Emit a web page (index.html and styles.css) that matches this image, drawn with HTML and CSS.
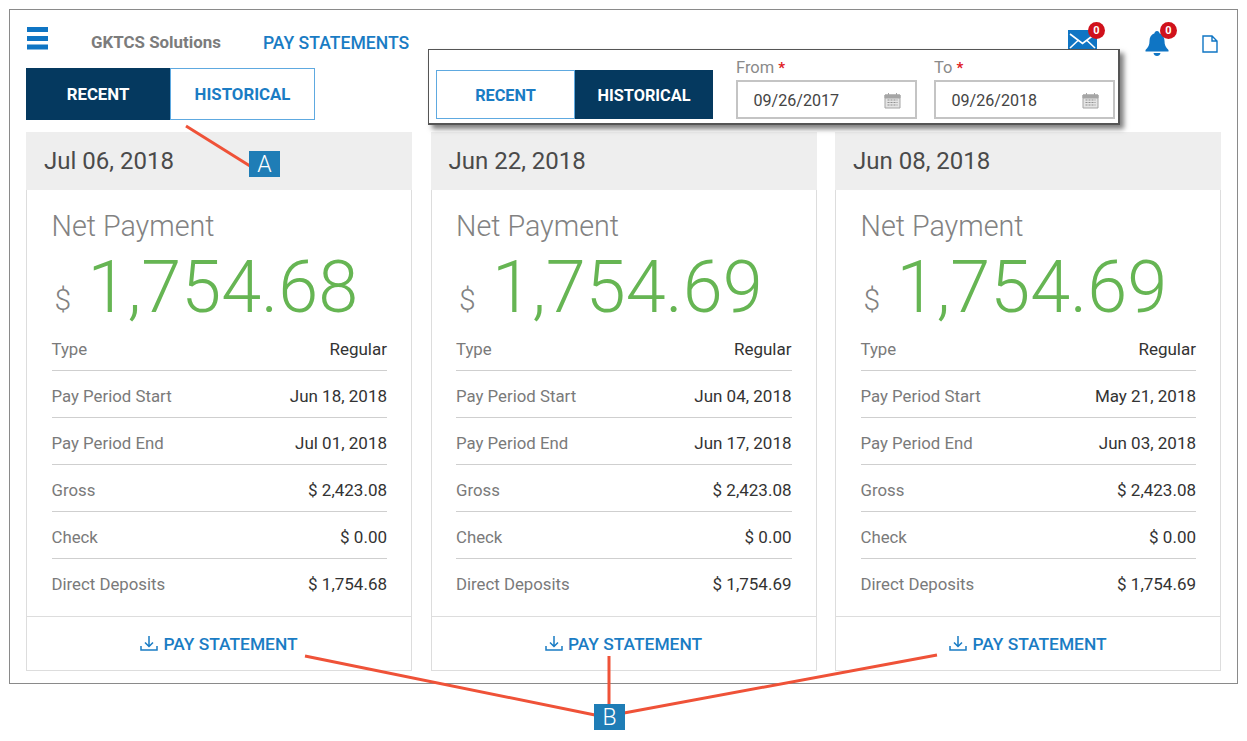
FILE: index.html
```html
<!DOCTYPE html>
<html lang="en">
<head>
    <meta charset="UTF-8">
    <title>Pay Statements</title>
    <link rel="stylesheet" href="styles.css">
</head>
<body>
    <div class="frame">
        <div class="header">
            <svg class="menu-icon" width="21" height="23" viewBox="0 0 21 23"><path d="M0 0h21v5H0zM0 9h21v5H0zM0 17.500h21v5H0z" fill="#0f75c4"/></svg>
            <div class="company">GKTCS Solutions</div>
            <div class="page-title">PAY STATEMENTS</div>
            <div class="header-icons">
                <div class="icon-wrap mail">
                    <svg width="29" height="24" viewBox="0 0 29 24"><rect width="29" height="24" fill="#0f75c4"/><path d="M2 4l12.500 9.500L27 4M2 18l8-7.500M27 18l-8-7.500" fill="none" stroke="#fff" stroke-width="1.600"/></svg>
                    <span class="badge">0</span>
                </div>
                <div class="icon-wrap bell">
                    <svg width="24" height="26" viewBox="0 0 24 26"><path d="M12 1c1.500 0 2.500 1 2.500 2.300C18 4.500 19.500 7.500 19.500 11c0 4 1.200 6.500 4 9v1.500H.5V20c2.800-2.500 4-5 4-9 0-3.500 1.500-6.500 5-7.700C9.500 2 10.500 1 12 1zM8.500 23h7c-.3 1.800-1.700 3-3.500 3s-3.200-1.200-3.500-3z" fill="#0f75c4"/></svg>
                    <span class="badge">0</span>
                </div>
                <svg class="doc-icon" width="16" height="18" viewBox="0 0 16 18"><path d="M1 1h9l5 5v11H1zM10 1v5h5" fill="none" stroke="#0f75c4" stroke-width="1.400"/></svg>
            </div>
        </div>

        <div class="tabs">
            <div class="tab active">RECENT</div>
            <div class="tab">HISTORICAL</div>
        </div>

        <div class="cards">
            <div class="card">
                <div class="card-date">Jul 06, 2018</div>
                <div class="card-body">
                    <div class="net-label">Net Payment</div>
                    <div class="net-amount"><span class="dollar">$</span><span class="amount">1,754.68</span></div>
                    <div class="row"><span>Type</span><span class="val">Regular</span></div>
                    <div class="row"><span>Pay Period Start</span><span class="val">Jun 18, 2018</span></div>
                    <div class="row"><span>Pay Period End</span><span class="val">Jul 01, 2018</span></div>
                    <div class="row"><span>Gross</span><span class="val">$ 2,423.08</span></div>
                    <div class="row"><span>Check</span><span class="val">$ 0.00</span></div>
                    <div class="row"><span>Direct Deposits</span><span class="val">$ 1,754.68</span></div>
                </div>
                <div class="card-footer">
                    <svg width="18" height="17" viewBox="0 0 18 17"><path d="M9 1v10M5 7.500l4 4 4-4M1 11v4h16v-4" fill="none" stroke="#1a7cc4" stroke-width="1.500"/></svg>
                    PAY STATEMENT
                </div>
            </div>
            <div class="card">
                <div class="card-date">Jun 22, 2018</div>
                <div class="card-body">
                    <div class="net-label">Net Payment</div>
                    <div class="net-amount"><span class="dollar">$</span><span class="amount">1,754.69</span></div>
                    <div class="row"><span>Type</span><span class="val">Regular</span></div>
                    <div class="row"><span>Pay Period Start</span><span class="val">Jun 04, 2018</span></div>
                    <div class="row"><span>Pay Period End</span><span class="val">Jun 17, 2018</span></div>
                    <div class="row"><span>Gross</span><span class="val">$ 2,423.08</span></div>
                    <div class="row"><span>Check</span><span class="val">$ 0.00</span></div>
                    <div class="row"><span>Direct Deposits</span><span class="val">$ 1,754.69</span></div>
                </div>
                <div class="card-footer">
                    <svg width="18" height="17" viewBox="0 0 18 17"><path d="M9 1v10M5 7.500l4 4 4-4M1 11v4h16v-4" fill="none" stroke="#1a7cc4" stroke-width="1.500"/></svg>
                    PAY STATEMENT
                </div>
            </div>
            <div class="card">
                <div class="card-date">Jun 08, 2018</div>
                <div class="card-body">
                    <div class="net-label">Net Payment</div>
                    <div class="net-amount"><span class="dollar">$</span><span class="amount">1,754.69</span></div>
                    <div class="row"><span>Type</span><span class="val">Regular</span></div>
                    <div class="row"><span>Pay Period Start</span><span class="val">May 21, 2018</span></div>
                    <div class="row"><span>Pay Period End</span><span class="val">Jun 03, 2018</span></div>
                    <div class="row"><span>Gross</span><span class="val">$ 2,423.08</span></div>
                    <div class="row"><span>Check</span><span class="val">$ 0.00</span></div>
                    <div class="row"><span>Direct Deposits</span><span class="val">$ 1,754.69</span></div>
                </div>
                <div class="card-footer">
                    <svg width="18" height="17" viewBox="0 0 18 17"><path d="M9 1v10M5 7.500l4 4 4-4M1 11v4h16v-4" fill="none" stroke="#1a7cc4" stroke-width="1.500"/></svg>
                    PAY STATEMENT
                </div>
            </div>
        </div>
    </div>

    <!-- popup showing the historical state -->
    <div class="popup">
        <div class="tabs popup-tabs">
            <div class="tab">RECENT</div>
            <div class="tab active">HISTORICAL</div>
        </div>
        <div class="field">
            <div class="field-label">From <b>*</b></div>
            <div class="date-input">09/26/2017
                <svg width="17" height="17" viewBox="0 0 17 17"><path d="M1 3h15v13H1z" fill="#e4e4e4" stroke="#a5a5a5"/><path d="M1 3h15v3H1zM4.500 1v3M12.500 1v3" fill="#a5a5a5" stroke="#a5a5a5"/><path d="M3.500 8h10M3.500 10.500h10M3.500 13h10" stroke="#8f8f8f" stroke-dasharray="2 1"/></svg>
            </div>
        </div>
        <div class="field">
            <div class="field-label">To <b>*</b></div>
            <div class="date-input">09/26/2018
                <svg width="17" height="17" viewBox="0 0 17 17"><path d="M1 3h15v13H1z" fill="#e4e4e4" stroke="#a5a5a5"/><path d="M1 3h15v3H1zM4.500 1v3M12.500 1v3" fill="#a5a5a5" stroke="#a5a5a5"/><path d="M3.500 8h10M3.500 10.500h10M3.500 13h10" stroke="#8f8f8f" stroke-dasharray="2 1"/></svg>
            </div>
        </div>
    </div>

    <!-- callouts -->
    <svg class="callout-lines" width="1247" height="741" viewBox="0 0 1247 741">
        <path d="M186 126L250 166M305 656L595 715M609 656V704M624 713L937 655" fill="none" stroke="#ef5238" stroke-width="3"/>
    </svg>
    <div class="callout callout-a">A</div>
    <div class="callout callout-b">B</div>
</body>
</html>
```

FILE: styles.css
```css
* {
    box-sizing: border-box;
}
body {
    margin: 0;
    width: 1247px;
    height: 741px;
    position: relative;
    overflow: hidden;
    background-color: white;
    font-family: Roboto, "Liberation Sans", sans-serif;
    padding: 9px 0 0 9px;
}
.frame {
    width: 1229px;
    height: 675px;
    border: 1px solid #8a8a8a;
    padding: 17px 16px 0 16px;
}
.header {
    display: flex;
    align-items: center;
    height: 23px;
    position: relative;
}
.menu-icon {
    margin-left: 1px;
}
.company {
    margin-left: 43px;
    margin-top: 7px;
    font-size: 16.900px;
    font-weight: 700;
    color: #7c7c7c;
}
.page-title {
    margin-left: 42px;
    margin-top: 8px;
    font-size: 17.600px;
    font-weight: 500;
    color: #1a7cc4;
}
.header-icons {
    margin-left: auto;
    display: flex;
    align-items: flex-start;
    height: 23px;
    padding-top: 3px;
}
.icon-wrap {
    position: relative;
}
.bell {
    margin-left: 48px;
}
.doc-icon {
    margin: 5px 3px 0 33px;
}
.badge {
    position: absolute;
    top: -8px;
    right: -8px;
    width: 17px;
    height: 17px;
    border-radius: 50%;
    background-color: #d0111b;
    color: white;
    font-size: 11px;
    font-weight: 700;
    line-height: 17px;
    text-align: center;
}
.tabs {
    display: flex;
    width: 289px;
    height: 52px;
    margin-top: 18px;
}
.tab {
    flex: none;
    width: 145px;
    border: 1px solid #5ea9e0;
    color: #1a7cc4;
    font-size: 16.800px;
    font-weight: 700;
    display: flex;
    align-items: center;
    justify-content: center;
    padding-bottom: 1px;
}
.tab.active {
    width: 144px;
    background-color: #05395f;
    border-color: #05395f;
    color: white;
}
.cards {
    display: flex;
    gap: 18.500px;
    margin-top: 12px;
}
.card {
    width: 386px;
    height: 539px;
    display: flex;
    flex-direction: column;
}
.card-date {
    height: 58px;
    background-color: #eeeeee;
    padding-left: 18px;
    display: flex;
    align-items: center;
    font-size: 24px;
    color: #4a4a4a;
}
.card-body {
    flex: 1;
    padding: 16px 24px 0 24.500px;
    border-left: 1px solid #dddddd;
    border-right: 1px solid #dddddd;
}
.net-label {
    font-size: 28.700px;
    font-weight: 300;
    color: #828282;
    line-height: 40px;
}
.net-amount {
    display: flex;
    align-items: flex-start;
    height: 78px;
    padding-top: 6px;
    line-height: 72px;
}
.dollar {
    font-size: 30px;
    font-weight: 300;
    line-height: 40px;
    color: #828282;
    margin: 28px 0 0 3px;
    width: 33px;
}
.amount {
    font-size: 72px;
    font-weight: 300;
    color: #66b553;
}
.row {
    display: flex;
    justify-content: space-between;
    align-items: center;
    height: 47px;
    padding-top: 3px;
    font-size: 16.800px;
    color: #7a7a7a;
    border-bottom: 1px solid #cfcfcf;
}
.row:last-child {
    border-bottom: none;
}
.val {
    color: #333333;
    font-size: 17px;
}
.card-footer {
    height: 55px;
    border: 1px solid #dddddd;
    display: flex;
    align-items: center;
    justify-content: center;
    gap: 5px;
    font-size: 17.400px;
    font-weight: 500;
    color: #1a7cc4;
}
.popup {
    position: absolute;
    left: 428px;
    top: 49px;
    width: 692px;
    height: 76px;
    background-color: white;
    border: 2px solid #555555;
    border-width: 1px 2px 2px 1px;
    box-shadow: 4px 4px 5px rgba(0, 0, 0, 0.5);
    display: flex;
    padding: 10px 0 0 7px;
}
.popup-tabs {
    flex: none;
    width: 277px;
    height: 49px;
    margin-top: 10px;
    margin-right: 23px;
}
.popup-tabs .tab {
    width: 139px;
    padding: 1px 0 0;
    font-size: 16.300px;
}
.popup-tabs .tab.active {
    width: 138px;
}
.field {
    flex: none;
    width: 181px;
    margin-right: 17px;
}
.field:last-child {
    margin-right: 0;
}
.field-label {
    font-size: 16.500px;
    color: #8a8a8a;
    height: 22px;
    margin-top: -2px;
}
.field-label b {
    color: #e01b24;
    font-size: 15px;
    font-weight: 700;
}
.date-input {
    height: 39px;
    border: 2px solid #c4c4c4;
    display: flex;
    align-items: center;
    justify-content: space-between;
    padding: 1px 14px 0 15.500px;
    font-size: 16.100px;
    color: #444444;
}
.callout-lines {
    position: absolute;
    left: 0;
    top: 0;
}
.callout {
    position: absolute;
    width: 31px;
    height: 26px;
    background-color: #1f7db6;
    color: white;
    font-size: 23px;
    font-weight: 300;
    line-height: 27px;
    text-align: center;
}
.callout-a {
    left: 249px;
    top: 151px;
}
.callout-b {
    left: 594px;
    top: 704px;
}
```
